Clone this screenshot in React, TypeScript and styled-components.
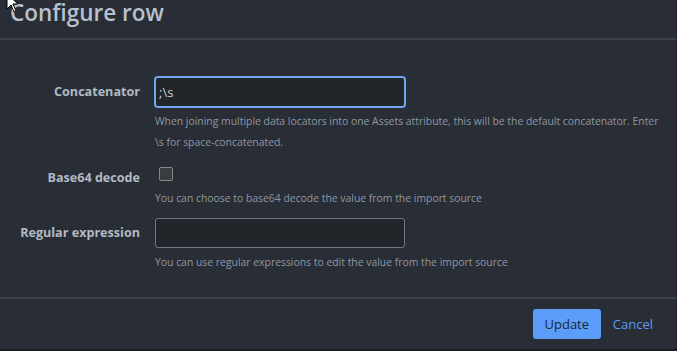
import styled, { createGlobalStyle } from 'styled-components';

const GlobalStyle = createGlobalStyle`
  html, body {
    margin: 0;
    padding: 0;
    background: #282c34;
  }
  body {
    font-family: "Open Sans", "Noto Sans", sans-serif;
  }
`;

const Modal = styled.div`
  position: relative;
  width: 677px;
  height: 351px;
  box-sizing: border-box;
  background: #292d35;
  border-right: 1px solid #1f2227;
  border-bottom: 2px solid #1b1e22;
  display: flex;
  flex-direction: column;
  overflow: hidden;
`;

const Header = styled.div`
  height: 40px;
  box-sizing: border-box;
  border-bottom: 2px solid #3a4347;
  padding: 0 10px;
  display: flex;
  align-items: flex-start;
`;

const Title = styled.h2`
  margin: 0;
  margin-top: -3px;
  font-size: 22.5px;
  line-height: 32px;
  font-weight: 600;
  color: #b7c1cd;
`;

const Body = styled.div`
  flex: 1;
  padding: 37px 0 0 0;
  border-bottom: 2px solid #3a4347;
`;

const FormGroup = styled.div<{ $gap?: number }>`
  display: grid;
  grid-template-columns: 140px 250px;
  column-gap: 15px;
  margin-bottom: ${(p) => p.$gap ?? 10}px;
`;

const Label = styled.label<{ $lh: number; $pt?: number }>`
  text-align: right;
  font-size: 12.6px;
  font-weight: 700;
  color: #b1bac4;
  line-height: ${(p) => p.$lh}px;
  padding-top: ${(p) => p.$pt ?? 0}px;
  white-space: nowrap;
`;

const Control = styled.div`
  display: flex;
  flex-direction: column;
`;

const TextInput = styled.input<{ $focused?: boolean }>`
  box-sizing: border-box;
  width: 250px;
  height: 30px;
  background: #22262a;
  border: 1px solid ${(p) => (p.$focused ? '#70a8f4' : '#6a7886')};
  box-shadow: ${(p) => (p.$focused ? '0 0 0 1px #70a8f4' : 'none')};
  border-radius: 3px;
  color: #c4ccd4;
  font-family: "Open Sans", sans-serif;
  font-size: 13px;
  padding: 0 3px;
  outline: none;
`;

const CheckWrap = styled.div`
  height: 20px;
  display: flex;
  align-items: flex-start;
`;

const CheckBox = styled.span`
  display: block;
  box-sizing: border-box;
  width: 14px;
  height: 14px;
  margin: 3px 0 0 4px;
  background: #3a3d40;
  border: 1px solid #85898d;
  border-radius: 2px;
`;

const Help = styled.div`
  margin-top: 4px;
  width: 520px;
  font-size: 10.4px;
  line-height: 21px;
  color: #8e98a3;
  white-space: nowrap;
`;

const Footer = styled.div`
  height: 50px;
  box-sizing: border-box;
  padding: 10px 23px 0 0;
  display: flex;
  justify-content: flex-end;
  align-items: flex-start;
  gap: 12px;
`;

const PrimaryButton = styled.button`
  height: 30px;
  width: 68px;
  border: none;
  border-radius: 3px;
  background: #5a9ef8;
  color: #1d2633;
  font-family: "Open Sans", sans-serif;
  font-size: 13px;
  cursor: pointer;
`;

const LinkButton = styled.button`
  height: 30px;
  border: none;
  background: none;
  padding: 0;
  color: #5a9ef8;
  font-family: "Open Sans", sans-serif;
  font-size: 13px;
`;

const Cursor = styled.svg`
  position: absolute;
  left: 6px;
  top: -7px;
`;

export default function App() {
  return (
    <>
      <GlobalStyle />
      <Modal>
        <Header>
          <Title>Configure row</Title>
        </Header>
        <Body>
          <FormGroup $gap={11}>
            <Label $lh={30}>Concatenator</Label>
            <Control>
              <TextInput $focused defaultValue=";\s" />
              <Help>
                When joining multiple data locators into one Assets attribute, this will be the default concatenator. Enter
                <br />
                \s for space-concatenated.
              </Help>
            </Control>
          </FormGroup>
          <FormGroup $gap={9}>
            <Label $lh={20} $pt={4}>Base64 decode</Label>
            <Control>
              <CheckWrap>
                <CheckBox />
              </CheckWrap>
              <Help>You can choose to base64 decode the value from the import source</Help>
            </Control>
          </FormGroup>
          <FormGroup>
            <Label $lh={30}>Regular expression</Label>
            <Control>
              <TextInput />
              <Help>You can use regular expressions to edit the value from the import source</Help>
            </Control>
          </FormGroup>
        </Body>
        <Footer>
          <PrimaryButton>Update</PrimaryButton>
          <LinkButton>Cancel</LinkButton>
        </Footer>
        <Cursor width="14" height="20" viewBox="0 0 14 20">
          <path d="M1 1 L1 16 L5 12 L8 19 L10 18 L7 11 L12 11 Z" fill="#fff" stroke="#000" strokeWidth="1" />
        </Cursor>
      </Modal>
    </>
  );
}
